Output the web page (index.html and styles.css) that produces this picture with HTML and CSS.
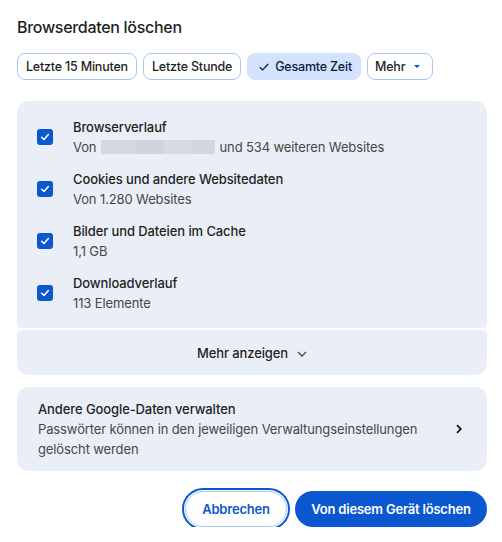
FILE: index.html
```html
<!DOCTYPE html>
<html lang="de">
<head>
<meta charset="utf-8">
<title>Browserdaten löschen</title>
<link rel="stylesheet" href="styles.css">
</head>
<body>
<div class="dialog">
  <h1 class="title">Browserdaten löschen</h1>

  <div class="chips">
    <button class="chip">Letzte 15 Minuten</button>
    <button class="chip">Letzte Stunde</button>
    <button class="chip chip-selected">
      <svg class="chip-check" width="10" height="8" viewBox="0 0 10 8"><path d="M0.8 4.2 L3.6 6.9 L9.2 1" fill="none" stroke="currentColor" stroke-width="1.3"/></svg>
      Gesamte Zeit
    </button>
    <button class="chip chip-menu">Mehr <span class="caret"></span></button>
  </div>

  <div class="panel panel-items">
    <div class="item">
      <span class="checkbox"><svg width="16" height="16" viewBox="0 0 16 16"><path d="M4.6 8.3 L7 10.5 L11.4 5.6" fill="none" stroke="#fff" stroke-width="1.5" stroke-linecap="round" stroke-linejoin="round"/></svg></span>
      <div class="item-text">
        <div class="item-title">Browserverlauf</div>
        <div class="item-sub">Von <span class="redacted"></span> und 534 weiteren Websites</div>
      </div>
    </div>
    <div class="item">
      <span class="checkbox"><svg width="16" height="16" viewBox="0 0 16 16"><path d="M4.6 8.3 L7 10.5 L11.4 5.6" fill="none" stroke="#fff" stroke-width="1.5" stroke-linecap="round" stroke-linejoin="round"/></svg></span>
      <div class="item-text">
        <div class="item-title">Cookies und andere Websitedaten</div>
        <div class="item-sub">Von 1.280 Websites</div>
      </div>
    </div>
    <div class="item">
      <span class="checkbox"><svg width="16" height="16" viewBox="0 0 16 16"><path d="M4.6 8.3 L7 10.5 L11.4 5.6" fill="none" stroke="#fff" stroke-width="1.5" stroke-linecap="round" stroke-linejoin="round"/></svg></span>
      <div class="item-text">
        <div class="item-title">Bilder und Dateien im Cache</div>
        <div class="item-sub">1,1 GB</div>
      </div>
    </div>
    <div class="item">
      <span class="checkbox"><svg width="16" height="16" viewBox="0 0 16 16"><path d="M4.6 8.3 L7 10.5 L11.4 5.6" fill="none" stroke="#fff" stroke-width="1.5" stroke-linecap="round" stroke-linejoin="round"/></svg></span>
      <div class="item-text">
        <div class="item-title">Downloadverlauf</div>
        <div class="item-sub">113 Elemente</div>
      </div>
    </div>
  </div>

  <div class="panel panel-more">
    <span class="more-label">Mehr anzeigen</span>
    <svg class="more-chevron" width="10" height="6" viewBox="0 0 10 6"><path d="M1 1 L5 5 L9 1" fill="none" stroke="#474747" stroke-width="1.3"/></svg>
  </div>

  <div class="panel panel-google">
    <div class="google-text">
      <div class="item-title">Andere Google-Daten verwalten</div>
      <div class="item-sub">Passwörter können in den jeweiligen Verwaltungseinstellungen gelöscht werden</div>
    </div>
    <svg class="google-chevron" width="8" height="10" viewBox="0 0 8 10"><path d="M2 1.2 L5.8 5 L2 8.8" fill="none" stroke="#1f1f1f" stroke-width="1.8"/></svg>
  </div>

  <div class="actions">
    <button class="btn btn-outline">Abbrechen</button>
    <button class="btn btn-primary">Von diesem Gerät löschen</button>
  </div>
</div>
</body>
</html>
```

FILE: styles.css
```css
* { box-sizing: border-box; }

html, body {
  margin: 0;
  background: #ffffff;
}

body {
  font-family: Inter, "Noto Sans", sans-serif;
  color: #1f1f1f;
}

.dialog {
  width: 470px;
  margin-left: 17px;
  padding-top: 15px;
}

.title {
  margin: 0;
  font-size: 16px;
  font-weight: 500;
  line-height: 24px;
  color: #1f1f1f;
  letter-spacing: -0.3px;
}

.chips {
  display: flex;
  gap: 6px;
  margin-top: 14px;
}

.chip {
  height: 27px;
  padding: 0 8px;
  border: 1px solid #a8c7fa;
  border-radius: 8px;
  background: #fff;
  font-family: inherit;
  font-size: 12.5px;
  font-weight: 500;
  letter-spacing: -0.2px;
  color: #1f1f1f;
  display: flex;
  align-items: center;
  white-space: nowrap;
}

.chip-selected {
  background: #d3e3fd;
  border-color: #d3e3fd;
  color: #0a1d40;
  padding: 0 8px 0 11px;
  gap: 6px;
}

.chip-check { display: block; }

.chip-menu {
  gap: 9px;
  padding: 0 12px 0 7px;
}

.caret {
  width: 0;
  height: 0;
  border-left: 3px solid transparent;
  border-right: 3px solid transparent;
  border-top: 3px solid #0b57d0;
}

.panel {
  background: #eaeff7;
}

.panel-items {
  margin-top: 21px;
  border-radius: 12px 12px 4px 4px;
  padding: 16px 20px 15px;
  display: flex;
  flex-direction: column;
  gap: 12px;
}

.item {
  display: flex;
  align-items: center;
  gap: 20px;
}

.checkbox {
  width: 16px;
  height: 16px;
  border-radius: 3px;
  background: #0b57d0;
  flex: none;
  display: flex;
}

.item-title {
  font-size: 13px;
  font-weight: 500;
  line-height: 20px;
  color: #1f1f1f;
  letter-spacing: -0.1px;
}

.item-sub {
  font-size: 13px;
  font-weight: 400;
  line-height: 20px;
  color: #474747;
  letter-spacing: -0.12px;
}

.redacted {
  display: inline-block;
  width: 114px;
  height: 14px;
  vertical-align: -2px;
  margin: 0 1px;
  background: linear-gradient(90deg, #d5d8de 0 30%, #d1d4da 30% 55%, #d7dae0 55% 80%, #d3d6dc 80% 100%);
}

.panel-more {
  margin-top: 2px;
  height: 45px;
  border-radius: 4px 4px 12px 12px;
  display: flex;
  align-items: center;
  justify-content: center;
  gap: 9px;
}

.more-label {
  font-size: 13px;
  font-weight: 500;
  color: #1f1f1f;
  letter-spacing: -0.1px;
}

.more-chevron { margin-top: 2px; }

.panel-google {
  margin-top: 12px;
  border-radius: 12px;
  padding: 12px 24px 12px 21px;
  display: flex;
  align-items: center;
  gap: 30px;
}

.google-text { flex: 1; }

.google-chevron { flex: none; }

.actions {
  display: flex;
  justify-content: flex-end;
  gap: 8px;
  margin-top: 20px;
}

.btn {
  height: 36px;
  border-radius: 18px;
  font-family: inherit;
  font-size: 13px;
  font-weight: 600;
  letter-spacing: -0.2px;
  padding: 0;
  white-space: nowrap;
  text-align: center;
}

.btn-outline {
  background: #fff;
  color: #0b57d0;
  border: 1px solid #a8c7fa;
  outline: 2px solid #0b57d0;
  outline-offset: 1px;
  width: 102px;
}

.btn-primary {
  background: #0b57d0;
  color: #fff;
  border: none;
  width: 192px;
}
```
